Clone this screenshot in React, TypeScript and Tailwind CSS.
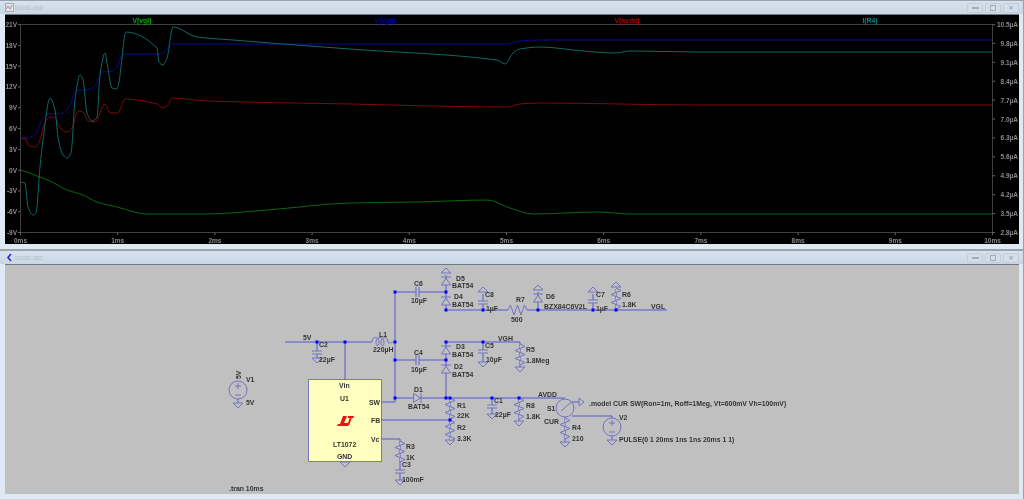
const font = { fontFamily: '"Liberation Sans", Arial, sans-serif' };

type Pt = [number, number];

// monotone cubic, catmull-rom overshot on the flat parts
function smooth(pts: Pt[]) {
  const slopes = pts.slice(0, -1).map((p, i) => (pts[i + 1][1] - p[1]) / (pts[i + 1][0] - p[0]));
  const tangent = (i: number) => {
    if (i === 0) return slopes[0];
    if (i === pts.length - 1) return slopes[i - 1];
    const a = slopes[i - 1];
    const b = slopes[i];
    return a * b <= 0 ? 0 : (2 * a * b) / (a + b);
  };
  let d = `M${pts[0][0]} ${pts[0][1]}`;
  for (let i = 0; i < pts.length - 1; i++) {
    const dx = (pts[i + 1][0] - pts[i][0]) / 3;
    d += ` C${pts[i][0] + dx} ${pts[i][1] + tangent(i) * dx} ${pts[i + 1][0] - dx} ${pts[i + 1][1] - tangent(i + 1) * dx} ${pts[i + 1][0]} ${pts[i + 1][1]}`;
  }
  return d;
}

const traces: { color: string; pts: Pt[] }[] = [
  {
    color: "#0a680a",
    pts: [[20.5,170],[27,172],[37,176],[50,181],[67,190],[83,195],[97,202],[117,207],[147,214],[207,214],[267,210],[350,203],[417,202],[487,200],[510,208],[533,214],[597,212],[630,214],[700,214],[992,214]],
  },
  {
    color: "#0a0a90",
    pts: [[20.5,138],[26,138],[35,135],[42,120],[48,114],[63,113],[69,107],[76,91],[90,89],[95,86],[102,72],[112,71],[117,67],[123,54],[160,54],[167,50],[170,44],[350,44],[507,44],[520,41],[540,40],[700,40],[992,40]],
  },
  {
    color: "#800a0a",
    pts: [[20.5,138],[26,139],[28,145],[35,147],[40,140],[45,122],[50,117],[55,118],[60,128],[67,132],[72,128],[78,111],[83,112],[88,121],[95,122],[105,104],[110,113],[118,113],[125,99],[157,104],[163,108],[168,105],[172,98],[207,101],[350,104],[507,107],[520,104],[540,103],[700,105],[992,105]],
  },
  {
    color: "#0e6868",
    pts: [[20.5,182],[25,183],[28,207],[33,215],[36,213],[40,167],[43,140],[50,98],[55,110],[58,137],[62,153],[67,158],[71,153],[75,100],[80,75],[83,80],[87,113],[92,121],[97,117],[100,75],[105,53],[107,63],[112,88],[117,89],[119,82],[126,32],[157,48],[159,62],[163,65],[167,58],[173,27],[197,37],[233,40],[283,44],[350,49],[497,60],[505,64],[513,53],[520,49],[540,47],[583,51],[615,53],[630,51],[700,52],[992,52]],
  },
];

const leftTicks = [["21V",24.5],["18V",45.3],["15V",66.1],["12V",86.9],["9V",107.7],["6V",128.5],["3V",149.3],["0V",170.1],["-3V",190.9],["-6V",211.7],["-9V",232.5]] as const;
const rightTicks = ["10.5µA","9.8µA","9.1µA","8.4µA","7.7µA","7.0µA","6.3µA","5.6µA","4.9µA","4.2µA","3.5µA","2.8µA"];
const headers = [
  ["V(vgl)", 142, "#00b000"],
  ["V(vgh)", 385, "#0000b0"],
  ["V(avdd)", 627, "#b00000"],
  ["I(R4)", 870, "#008a8a"],
] as const;

function Plot() {
  return (
    <svg viewBox="5 15 1014 229" className="block h-full w-full bg-black blur-[0.4px]" style={font}>
      <path d="M20.5 24.5H992.5V232.5H20.5Z" fill="none" stroke="#404040" />
      {traces.map((t) => (
        <path key={t.color} d={smooth(t.pts)} fill="none" stroke={t.color} />
      ))}
      {headers.map(([label, x, color]) => (
        <text key={label} x={x} y="23" textAnchor="middle" fontSize="6.8" fontWeight="700" fill={color}>
          {label}
        </text>
      ))}
      {leftTicks.map(([label, y]) => (
        <g key={label}>
          <path d={`M18 ${y}H20.5`} stroke="#666" />
          <text x="17" y={y + 2.5} textAnchor="end" fontSize="6.5" fontWeight="700" fill="#8a8a8a">
            {label}
          </text>
        </g>
      ))}
      {rightTicks.map((label, i) => {
        const y = 24.5 + (i * 208) / 11;
        return (
          <g key={label}>
            <path d={`M992.5 ${y}H995`} stroke="#666" />
            <text x="1018" y={y + 2.5} textAnchor="end" fontSize="6.5" fontWeight="700" fill="#8a8a8a">
              {label}
            </text>
          </g>
        );
      })}
      {Array.from({ length: 11 }, (_, i) => {
        const x = 20.5 + i * 97.2;
        return (
          <g key={i}>
            <path d={`M${x} 232.5V235`} stroke="#666" />
            <text x={x} y="242.5" textAnchor="middle" fontSize="6.5" fontWeight="700" fill="#8a8a8a">
              {i}ms
            </text>
          </g>
        );
      })}
    </svg>
  );
}

const WIRE = "#5656d2";
const SYM = "#7272c2";
const BG = "#c0c0c0";

const wires = [
  "M285 342H372", "M345 342V380", "M317 342V358",
  "M395 292V402", "M395 292H416", "M419 292H446", "M395 360H416", "M419 360H446",
  "M446 275V310", "M446 310H508", "M527 310H667", "M446 342V398", "M446 342H520",
  "M381 402H395", "M395 398H413", "M421 398H565", "M381 420H450", "M381 439H400",
  "M450 398V440", "M483 294V310", "M483 342V362", "M538 292V310",
  "M593 294V310", "M616 289V310", "M520 342V367", "M492 398V414", "M519 398V421",
  "M572 402H579", "M572 416H612V418", "M400 439V480", "M565 417V442", "M612 436V440",
  "M238 399V403",
];

const nodes: Pt[] = [
  [317,342],[345,342],[395,342],[395,360],[395,398],[395,292],[446,292],[446,310],[483,310],[538,310],
  [593,310],[616,310],[446,342],[483,342],[446,360],[446,398],[450,398],[450,420],[492,398],[519,398],
];

function Zig({ x, y }: { x: number; y: number }) {
  return <path d={`M${x} ${y}l5 2.5l-10 4l10 4l-10 4l10 4l-5 2.5`} fill={BG} stroke={SYM} />;
}

function HZig({ x, y }: { x: number; y: number }) {
  return <path d={`M${x} ${y}l2.5 -5l3.5 10l3.5 -10l3.5 10l3.5 -10l2.5 5`} fill="none" stroke={SYM} />;
}

function Gnd({ x, y, up }: { x: number; y: number; up?: boolean }) {
  return <path d={up ? `M${x} ${y}l-5 5h10Z` : `M${x - 5} ${y}h10l-5 5Z`} fill={BG} stroke={SYM} />;
}

function Cap({ x, y }: { x: number; y: number }) {
  return (
    <g>
      <rect x={x - 1} y={y} width="2" height="3" fill={BG} />
      <path d={`M${x - 5} ${y}h10 M${x - 5} ${y + 3}h10`} fill="none" stroke={SYM} strokeWidth="1.2" />
    </g>
  );
}

function HCap({ x, y }: { x: number; y: number }) {
  return <path d={`M${x} ${y - 5}v10 M${x + 3} ${y - 5}v10`} fill="none" stroke={SYM} strokeWidth="1.2" />;
}

function Diode({ x, y }: { x: number; y: number }) {
  return <path d={`M${x} ${y}l-4.5 7h9Z M${x - 5} ${y - 1}h10`} fill={BG} stroke={SYM} />;
}

function Source({ x, y }: { x: number; y: number }) {
  return (
    <g fill="none" stroke={SYM}>
      <circle cx={x} cy={y} r="9" />
      <path d={`M${x - 3} ${y - 4}h6 M${x} ${y - 7}v6 M${x - 3} ${y + 5}h6`} />
    </g>
  );
}

const labels: [string, number, number][] = [
  ["5V",303,340],["C2",319,347],["22µF",319,362],["L1",379,337],["220µH",373,352],["C4",414,355],["10µF",411,372],
  ["D1",414,392],["BAT54",408,409],["Vin",339,388],["U1",340,401],["SW",369,405],["FB",371,423],["Vc",371,442],
  ["LT1072",333,447],["GND",337,459],["R3",406,449],["1K",406,460],["C3",402,467],["100mF",402,482],[".tran 10ms",229,491],
  ["V1",246,382],["5V",246,405],["D5",456,281],["BAT54",452,288],["D4",454,299],["BAT54",452,307],["C6",414,286],
  ["10µF",411,303],["C8",485,297],["1µF",486,311],["R7",516,302],["500",511,322],["D6",546,299],["BZX84C6V2L",544,309],
  ["C7",596,297],["1µF",596,311],["R6",622,297],["1.8K",622,307],["VGL",651,309],["VGH",498,341],["C5",485,348],
  ["10µF",486,362],["R5",526,352],["1.8Meg",526,363],["D3",456,349],["BAT54",452,357],["D2",454,369],["BAT54",452,377],
  ["R1",457,408],["22K",457,418],["R2",457,430],["3.3K",457,441],["C1",494,403],["22µF",495,417],["R8",526,408],
  ["1.8K",526,419],["AVDD",538,397],["S1",547,411],["CUR",544,424],["R4",572,430],["210",572,441],["V2",619,420],
  [".model CUR SW(Ron=1m, Roff=1Meg, Vt=600mV Vh=100mV)",589,406],["PULSE(0 1 20ms 1ns 1ns 20ms 1 1)",619,442],
];

function Schematic() {
  return (
    <svg viewBox="5 265 1014 229" className="block h-full w-full bg-[#c0c0c0] blur-[0.4px]" style={font}>
      <rect x="308.5" y="379.5" width="73" height="82" fill="#ffffc0" stroke="#7a7ab8" />
      {wires.map((d) => (
        <path key={d} d={d} fill="none" stroke={WIRE} />
      ))}

      {/* L1 */}
      <path d="M372 342c0-6 7-6 7 0c0 5-3 5-3 0c0-6 8-6 8 0c0 5-3 5-3 0c0-6 7-6 7 0c0 2 4 0 7 0" fill={BG} stroke={SYM} />

      <Cap x={317} y={351} />
      <Gnd x={317} y={358} />
      <HCap x={416} y={292} />
      <HCap x={416} y={360} />
      <Cap x={483} y={301} />
      <Cap x={593} y={300} />
      <Cap x={483} y={350} />
      <Cap x={492} y={405} />
      <Cap x={400} y={470} />

      <Gnd x={446} y={268} up />
      <Gnd x={483} y={287} up />
      <Gnd x={538} y={285} up />
      <Gnd x={593} y={287} up />
      <Gnd x={616} y={282} up />
      <Gnd x={483} y={362} />
      <Gnd x={520} y={367} />
      <Gnd x={450} y={440} />
      <Gnd x={492} y={414} />
      <Gnd x={519} y={421} />
      <Gnd x={565} y={442} />
      <Gnd x={612} y={440} />
      <Gnd x={238} y={403} />
      <Gnd x={400} y={480} />
      <Gnd x={345} y={462} />

      <Diode x={446} y={278} />
      <Diode x={446} y={298} />
      <Diode x={446} y={347} />
      <Diode x={446} y={366} />
      <Diode x={538} y={295} />
      <path d="M413.5 393.5l7 4.5l-7 4.5Z M421 393v10" fill={BG} stroke={SYM} />

      <Zig x={450} y={398} />
      <Zig x={450} y={420} />
      <Zig x={519} y={398} />
      <Zig x={565} y={418} />
      <Zig x={400} y={441} />
      <Zig x={520} y={344} />
      <Zig x={616} y={288} />
      <HZig x={508} y={310} />

      <Source x={238} y={390} />
      <Source x={612} y={427} />

      {/* S1 */}
      <g fill="none" stroke={SYM}>
        <circle cx="565" cy="408" r="9" />
        <path d="M561 411l8-7 M572 402l-3 2 M579 398l5 4l-5 4Z" />
      </g>

      {nodes.map(([x, y]) => (
        <rect key={`${x}-${y}`} x={x - 1.5} y={y - 1.5} width="3" height="3" fill="#0000ff" />
      ))}

      {/* LT logo */}
      <path d="M343 416h4l-3 7h5l-1 3h-11l1-2h2Z M348 416h6l-0.6 2h-1.7l-2.4 7h-2l2.4-7h-2Z" fill="#ee1111" />

      <g fontSize="6.9" fontWeight="700" fill="#333333">
        {labels.map(([text, x, y], i) => (
          <text key={i} x={x} y={y}>
            {text}
          </text>
        ))}
        <text transform="rotate(-90 241 379)" x="241" y="379">
          5V
        </text>
      </g>
    </svg>
  );
}

const btn = "flex h-[10px] w-[16px] items-center justify-center rounded-[2px] border border-[#c3ced9] bg-[#d3deea]";

function WinButtons() {
  return (
    <div className="flex gap-[2px]">
      <div className={btn}>
        <div className="h-[2px] w-[7px] bg-[#a3adb8]" />
      </div>
      <div className={btn}>
        <div className="h-[6px] w-[6px] border border-[#a3adb8]" />
      </div>
      <div className={`${btn} text-[9px] leading-none font-bold text-[#a3adb8]`}>×</div>
    </div>
  );
}

function Window({ title, icon, frame, children }: { title: string; icon: React.ReactNode; frame: string; children: React.ReactNode }) {
  return (
    <div className={`flex flex-col border-r border-[#9aa3ab] bg-[#dfe9f3] ${frame}`}>
      <div className="flex h-[13px] shrink-0 items-center justify-between bg-gradient-to-b from-[#d6e2ee] to-[#c9d7e5] pr-[4px] pl-[5px]">
        <div className="flex items-center gap-[1px]">
          {icon}
          <span className="text-[6.5px] text-[#b6bfc9]" style={font}>
            {title}
          </span>
        </div>
        <WinButtons />
      </div>
      <div className="ml-[5px] mr-[4px] min-h-0 flex-1 border-t border-[#6f7a84]">{children}</div>
      <div className="h-[5px] shrink-0" />
    </div>
  );
}

export default function App() {
  return (
    <div className="flex h-[499px] w-[1024px] flex-col overflow-hidden bg-[#dfe9f3]">
      <Window
        title="boost.raw"
        frame="h-[249px] border-t border-t-[#9aa3ab]"
        icon={
          <svg viewBox="0 0 9 9" className="h-[9px] w-[9px]">
            <rect x="0.5" y="0.5" width="8" height="8" fill="#dfe3ea" stroke="#aab" />
            <path d="M1 6l2-3l2 3l2-4" fill="none" stroke="#b08a90" />
          </svg>
        }
      >
        <Plot />
      </Window>
      <Window
        title="boost.asc"
        frame="h-[250px] border-t-2 border-t-[#9aa3ab]"
        icon={
          <svg viewBox="0 0 9 9" className="h-[9px] w-[9px]">
            <path d="M6 1L3 4.5L6 8" fill="none" stroke="#2a2ad0" strokeWidth="1.6" />
          </svg>
        }
      >
        <Schematic />
      </Window>
    </div>
  );
}
